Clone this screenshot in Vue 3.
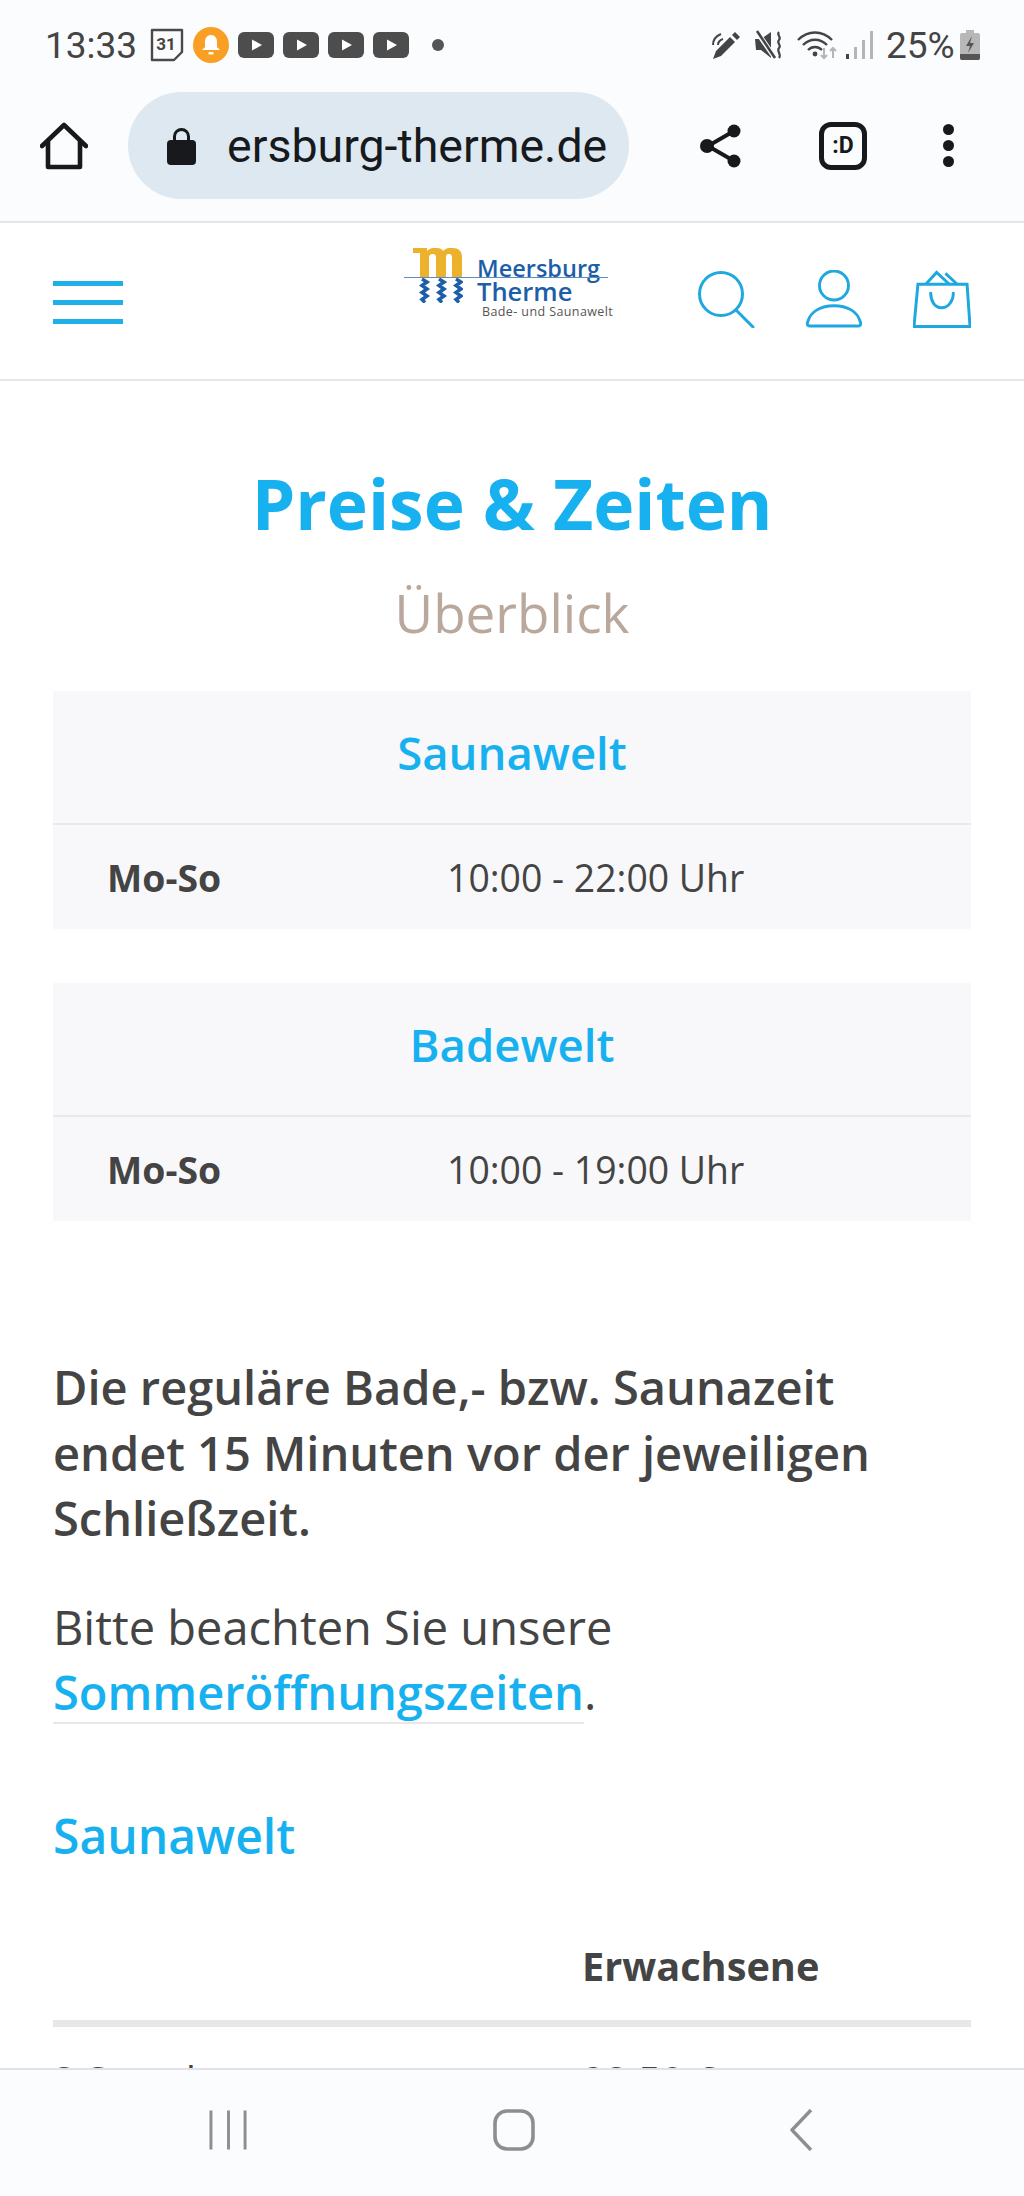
<template>
  <div class="screen">
    <div class="statusbar">
      <div class="status-left">
        <span class="clock">13:33</span>
        <svg class="ic-cal" viewBox="0 0 34 34"><path d="M2 2h30v22l-8 8H2z" fill="none" stroke="#4a4a4a" stroke-width="2.400" stroke-linejoin="round"/><text x="16" y="22" text-anchor="middle" class="cal-num">31</text></svg>
        <svg class="ic-bell" viewBox="0 0 36 36"><circle cx="18" cy="18" r="18" fill="#f9a024"/><path d="M18 8c-4 0-6 3-6 7v5l-3 3h18l-3-3v-5c0-4-2-7-6-7z" fill="#fff"/><rect x="15.500" y="25" width="5" height="2.500" rx="1.200" fill="#fff"/></svg>
        <div class="yt-group">
          <svg v-for="n in 4" :key="n" class="ic-yt" viewBox="0 0 36 26"><rect width="36" height="26" rx="6" fill="#4d4d4d"/><path d="M14 7.500l10 5.500-10 5.500z" fill="#fff"/></svg>
        </div>
        <span class="status-dot"></span>
      </div>
      <div class="status-right">
        <svg class="ic-pen" viewBox="0 0 30 30"><path d="M1 29l3-8L18 7l5 5L9 26z" fill="#444"/><path d="M20 5l3-3 5 5-3 3z" fill="#444"/><path d="M1 15c0-5 3-9 8-11M6 15c0-3 2-5 5-6" fill="none" stroke="#444" stroke-width="2"/></svg>
        <svg class="ic-mute" viewBox="0 0 28 30"><path d="M0 9h6l10-7v26L6 20H1z" fill="#444"/><path d="M2 2l18 26" stroke="#fbfcfe" stroke-width="5"/><path d="M2 1l18 27" stroke="#444" stroke-width="2.600"/><path d="M24 2c-3 3 3 5 0 8s3 5 0 8 3 6 0 10" fill="none" stroke="#444" stroke-width="2.200"/></svg>
        <svg class="ic-wifi" viewBox="0 0 40 30"><path d="M1 10c10-10 24-10 34 0M6 15c7-7 17-7 24 0M11 20c4-4 10-4 14 0" fill="none" stroke="#444" stroke-width="2.400"/><circle cx="18" cy="24" r="2.400" fill="#444"/><path d="M27 18v10M24 25l3 3 3-3M36 28V18M33 21l3-3 3 3" fill="none" stroke="#b5b5b5" stroke-width="2"/></svg>
        <svg class="ic-signal" viewBox="0 0 27 28"><rect x="0" y="23" width="3" height="5" fill="#444"/><rect x="8" y="16" width="3" height="12" fill="#b5b5b5"/><rect x="16" y="9" width="3" height="19" fill="#b5b5b5"/><rect x="24" y="0" width="3" height="28" fill="#b5b5b5"/></svg>
        <span class="percent">25%</span>
        <svg class="ic-batt" viewBox="0 0 20 30"><path d="M6 0h8v3h4a2 2 0 0 1 2 2v23a2 2 0 0 1-2 2H2a2 2 0 0 1-2-2V5a2 2 0 0 1 2-2h4z" fill="#b8b8b8"/><path d="M0 24h20v4a2 2 0 0 1-2 2H2a2 2 0 0 1-2-2z" fill="#555"/><path d="M12 6l-6 10h4l-2 7 6-10h-4z" fill="#555"/></svg>
      </div>
    </div>

    <div class="toolbar">
      <svg class="ic-home" viewBox="0 0 48 48"><path d="M2 24L24 3l22 21M8 19v26h32V19" fill="none" stroke="#17191c" stroke-width="4.600" stroke-linejoin="round" stroke-linecap="round"/></svg>
      <div class="urlbar">
        <svg class="ic-lock" viewBox="0 0 29 38"><path d="M7.500 15V9.500a7 7 0 0 1 14 0V15" fill="none" stroke="#17191c" stroke-width="3"/><rect y="13" width="29" height="25" rx="4" fill="#17191c"/></svg>
        <span class="url">ersburg-therme.de</span>
      </div>
      <div class="toolbar-actions">
        <svg class="ic-share" viewBox="0 0 42 44"><path d="M34 7L8 22l26 15" fill="none" stroke="#17191c" stroke-width="4"/><circle cx="34" cy="7" r="6.500" fill="#17191c"/><circle cx="7" cy="22" r="7" fill="#17191c"/><circle cx="34" cy="37" r="6.500" fill="#17191c"/></svg>
        <div class="tabs-btn">:D</div>
        <div class="dots"><span></span><span></span><span></span></div>
      </div>
    </div>

    <header class="site-header">
      <div class="burger"><span></span><span></span><span></span></div>
      <div class="logo">
        <svg class="logo-mark" viewBox="0 0 50 55">
          <path d="M0 0h14v3c3-3 7-3.500 10-3 3 0 5 1 6 3 3-3 7-3.500 10-3 6 0 9 4 9 9v20H39V10c0-3-1-4-3-4s-3 1-3 3v20H23V10c0-3-1-4-3-4s-4 1-4 3v20H7V5H0z" fill="#ecb22e"/>
          <path d="M9 31l5 3-5 3.500 5 3.500-5 3.500 5 3.500-5 3.500 3 3M26 31l5 3-5 3.500 5 3.500-5 3.500 5 3.500-5 3.500 3 3M43 31l5 3-5 3.500 5 3.500-5 3.500 5 3.500-5 3.500 3 3" fill="none" stroke="#1d5ea8" stroke-width="3.500"/>
        </svg>
        <div class="logo-line"></div>
        <div class="logo-text">
          <span class="logo-name">Meersburg</span>
          <span class="logo-name logo-name-big">Therme</span>
          <span class="logo-sub">Bade- und Saunawelt</span>
        </div>
      </div>
      <div class="header-icons">
        <svg class="ic-site" viewBox="0 0 58 58"><circle cx="24" cy="24" r="21.500" fill="none" stroke="#1fa8e0" stroke-width="3"/><path d="M39 40l17 17" stroke="#1fa8e0" stroke-width="3" stroke-linecap="round"/></svg>
        <svg class="ic-site" viewBox="0 0 58 60"><circle cx="29" cy="16" r="15" fill="none" stroke="#1fa8e0" stroke-width="3"/><path d="M4 58c-3 0-3-3-2-5 3-10 13-16 27-16s24 6 27 16c1 2 1 5-2 5z" fill="none" stroke="#1fa8e0" stroke-width="3" stroke-linejoin="round"/></svg>
        <svg class="ic-site" viewBox="0 0 59 58"><path d="M5 14h50l3 43H1z" fill="none" stroke="#1fa8e0" stroke-width="3"/><path d="M13 14L24 2l13 12M33 3l12 11" fill="none" stroke="#1fa8e0" stroke-width="3"/><path d="M18 23c0 8 4 15 11 15s12-7 12-15" fill="none" stroke="#1fa8e0" stroke-width="3" stroke-linecap="round"/></svg>
      </div>
    </header>

    <main class="content">
      <h1 class="title">Preise &amp; Zeiten</h1>
      <p class="subtitle">Überblick</p>

      <section v-for="block in hours" :key="block.name" class="hours">
        <h2 class="hours-head">{{ block.name }}</h2>
        <div class="hours-row">
          <strong class="hours-day">Mo-So</strong>
          <span>{{ block.time }}</span>
        </div>
      </section>

      <p class="lead">Die reguläre Bade,- bzw. Saunazeit endet 15 Minuten vor der jeweiligen Schließzeit.</p>
      <p class="note">Bitte beachten Sie unsere <a class="link">Sommeröffnungszeiten</a>.</p>

      <h3 class="section-head">Saunawelt</h3>
      <div class="price-head"><span>Erwachsene</span></div>
      <div class="price-row"><span>3 Stunden</span><span>28,50 €</span></div>
    </main>

    <nav class="navbar">
      <svg class="ic-recents" viewBox="0 0 40 40"><path d="M2 0v40M20 0v40M37 0v40" stroke="#8e8e8e" stroke-width="3"/></svg>
      <svg class="ic-navhome" viewBox="0 0 42 42"><rect x="2" y="2" width="38" height="38" rx="12" fill="none" stroke="#8e8e8e" stroke-width="3.600"/></svg>
      <svg class="ic-back" viewBox="0 0 24 42"><path d="M22 1L3 21l19 20" fill="none" stroke="#8e8e8e" stroke-width="3.400" stroke-linejoin="round"/></svg>
    </nav>
  </div>
</template>

<script setup>
const hours = [
  { name: "Saunawelt", time: "10:00 - 22:00 Uhr" },
  { name: "Badewelt", time: "10:00 - 19:00 Uhr" },
];
</script>

<style>
html,
body {
  margin: 0;
  background: #fff;
}
</style>

<style scoped>
.screen {
  width: 1024px;
  height: 2196px;
  display: flex;
  flex-direction: column;
  overflow: hidden;
  background: #fff;
  font-family: "Open Sans", "Liberation Sans", sans-serif;
  color: #444;
}

svg {
  display: block;
  flex: none;
}

.statusbar {
  height: 92px;
  padding: 0 44px 2px 45px;
  box-sizing: border-box;
  display: flex;
  justify-content: space-between;
  align-items: center;
  background: #fbfcfe;
  font-family: Roboto, "Liberation Sans", sans-serif;
  color: #444;
}

.status-left,
.status-right {
  display: flex;
  align-items: center;
}

.clock {
  width: 105px;
  font-size: 37px;
}

.percent {
  margin-left: 13px;
  width: 74px;
  font-size: 37px;
}

.ic-cal {
  width: 34px;
  height: 34px;
}

.cal-num {
  font: 700 17px Roboto, sans-serif;
  fill: #444;
}

.ic-bell {
  width: 36px;
  height: 36px;
  margin-left: 9px;
}

.yt-group {
  display: flex;
  gap: 9px;
  margin-left: 9px;
}

.ic-yt {
  width: 36px;
  height: 26px;
}

.status-dot {
  width: 12px;
  height: 12px;
  margin-left: 23px;
  border-radius: 50%;
  background: #555;
}

.ic-pen {
  width: 30px;
  height: 30px;
}

.ic-mute {
  width: 28px;
  height: 30px;
  margin-left: 13px;
}

.ic-wifi {
  width: 40px;
  height: 30px;
  margin-left: 14px;
}

.ic-signal {
  width: 27px;
  height: 28px;
  margin-left: 9px;
}

.ic-batt {
  width: 20px;
  height: 30px;
}

.toolbar {
  height: 131px;
  box-sizing: border-box;
  padding: 0 40px 22px;
  display: flex;
  align-items: center;
  background: #fbfcfe;
  border-bottom: 2px solid #dfe9ea;
}

.ic-home {
  width: 48px;
  height: 48px;
}

.urlbar {
  width: 501px;
  height: 107px;
  margin-left: 40px;
  padding-left: 39px;
  box-sizing: border-box;
  display: flex;
  align-items: center;
  border-radius: 54px;
  background: #dde8f0;
  overflow: hidden;
}

.ic-lock {
  width: 29px;
  height: 38px;
}

.url {
  margin-left: 31px;
  font-family: Roboto, "Liberation Sans", sans-serif;
  font-size: 46.500px;
  color: #17191c;
  white-space: nowrap;
}

.toolbar-actions {
  display: flex;
  align-items: center;
  margin-left: 71px;
}

.ic-share {
  width: 42px;
  height: 44px;
}

.tabs-btn {
  width: 48px;
  height: 48px;
  margin-left: 77px;
  box-sizing: border-box;
  display: flex;
  align-items: center;
  justify-content: center;
  border: 5px solid #17191c;
  border-radius: 12px;
  font: 700 23px Roboto, sans-serif;
  color: #17191c;
}

.dots {
  display: flex;
  flex-direction: column;
  gap: 5px;
  margin-left: 76px;
}

.dots span {
  width: 11px;
  height: 11px;
  border-radius: 50%;
  background: #17191c;
}

.site-header {
  position: relative;
  height: 158px;
  box-sizing: border-box;
  padding: 0 53px;
  display: flex;
  align-items: center;
  justify-content: space-between;
  border-bottom: 2px solid #e6e8ea;
}

.burger {
  display: flex;
  flex-direction: column;
  gap: 14px;
  width: 70px;
  margin-top: 3px;
}

.burger span {
  height: 5px;
  background: #1fb0ea;
}

.logo {
  position: relative;
  width: 210px;
  height: 72px;
  margin-left: 198px;
  margin-top: -34px;
  display: flex;
  align-items: flex-start;
  gap: 14px;
}

.logo-mark {
  width: 50px;
  height: 55px;
  margin-left: 9px;
}

.logo-line {
  position: absolute;
  left: 0;
  top: 29px;
  width: 204px;
  height: 1px;
  background: #5d8dbf;
}

.logo-text {
  display: flex;
  flex-direction: column;
  padding-top: 9px;
  white-space: nowrap;
}

.logo-name {
  font-size: 23.500px;
  line-height: 23px;
  font-weight: 600;
  color: #1d5ea8;
}

.logo-name-big {
  font-size: 25.500px;
}

.logo-sub {
  margin-left: 5px;
  margin-top: 1px;
  font-size: 12.500px;
  line-height: 16px;
  letter-spacing: 0.4px;
  color: #555;
}

.header-icons {
  display: flex;
  gap: 50px;
  margin-top: -4px;
}

.ic-site {
  width: 58px;
  height: 58px;
}

.content {
  flex: 1;
  min-height: 0;
  overflow: hidden;
  padding: 0 53px;
}

.title {
  margin: 82px 0 0;
  text-align: center;
  font-size: 69.500px;
  line-height: 80px;
  font-weight: 700;
  color: #18b1f0;
}

.subtitle {
  margin: 37px 0 0;
  text-align: center;
  font-size: 53px;
  line-height: 66px;
  color: #b9a89b;
}

.hours {
  margin-top: 54px;
  background: #f8f8fa;
}

.subtitle + .hours {
  margin-top: 45px;
}

.hours-head {
  margin: 0;
  height: 134px;
  box-sizing: border-box;
  padding-bottom: 10px;
  display: flex;
  align-items: center;
  justify-content: center;
  border-bottom: 2px solid #e8e9eb;
  font-size: 45.500px;
  font-weight: 600;
  color: #18b1f0;
}

.hours-row {
  height: 104px;
  display: grid;
  grid-template-columns: 340px 1fr;
  align-items: center;
  padding-left: 54px;
  font-size: 37.400px;
}

.hours-day {
  font-weight: 700;
}

.lead {
  margin: 134px 0 0;
  font-size: 47px;
  line-height: 65.500px;
  font-weight: 600;
}

.note {
  margin: 43px 0 0;
  font-size: 47px;
  line-height: 65.500px;
}

.link {
  color: #18b1f0;
  font-weight: 600;
  text-decoration: underline;
  text-decoration-color: #e6e8ea;
  text-decoration-thickness: 2px;
  text-decoration-skip-ink: none;
  text-underline-offset: 12px;
}

.section-head {
  margin: 75px 0 0;
  font-size: 48px;
  line-height: 70px;
  font-weight: 600;
  color: #18b1f0;
}

.price-head {
  margin-top: 69px;
  padding: 0 0 28px 529px;
  border-bottom: 7px solid #e7e7e7;
  font-size: 39.700px;
  line-height: 52px;
  font-weight: 700;
}

.price-row {
  display: grid;
  grid-template-columns: 529px 1fr;
  padding-top: 28px;
  font-size: 40px;
  line-height: 52px;
}

.navbar {
  height: 128px;
  box-sizing: border-box;
  border-top: 2px solid #dfe2e8;
  position: relative;
  display: flex;
  align-items: center;
  background: #fbfcfe;
  padding: 0 0 6px 209px;
}

.ic-recents {
  width: 39px;
  height: 40px;
}

.ic-navhome {
  width: 42px;
  height: 42px;
  margin-left: 245px;
}

.ic-back {
  width: 24px;
  height: 42px;
  margin-left: 254px;
}
</style>
